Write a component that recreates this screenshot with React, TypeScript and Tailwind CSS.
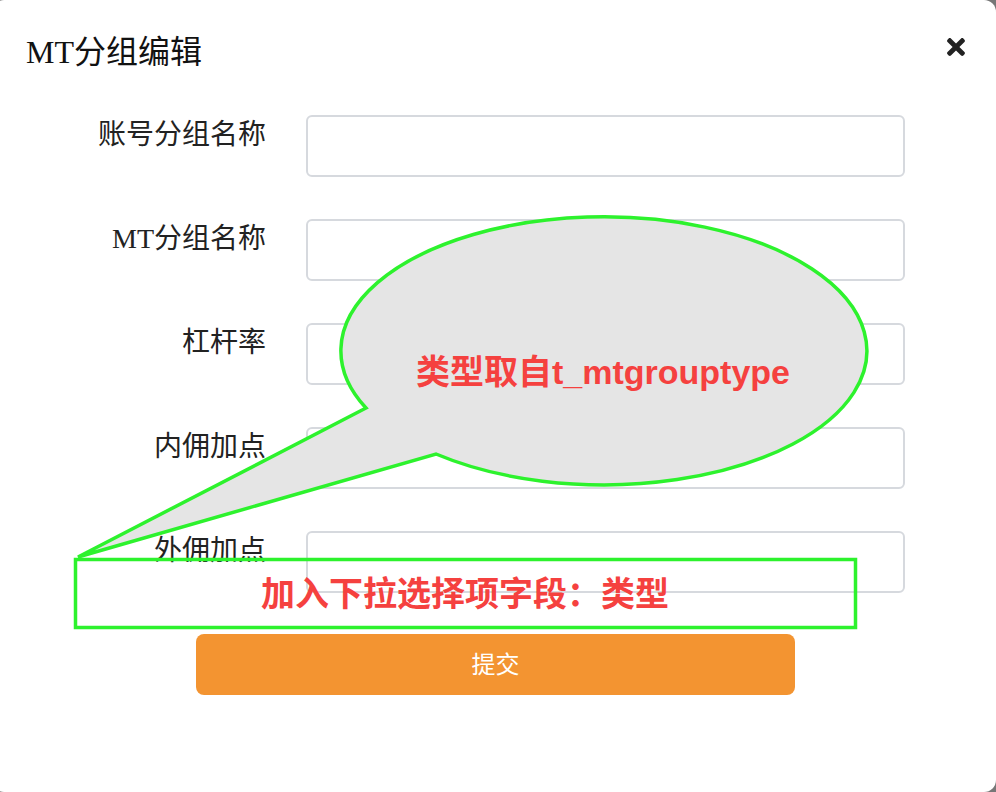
import React from 'react'
import { FaTimes } from 'react-icons/fa'

const serif = { fontFamily: '"Liberation Serif", "Noto Sans CJK SC", serif' }
const sans = { fontFamily: '"Liberation Sans", "Noto Sans CJK SC", sans-serif' }

const fields = ['账号分组名称', 'MT分组名称', '杠杆率', '内佣加点', '外佣加点']

const Row: React.FC<{ label: string }> = ({ label }) => (
  <div className="flex items-start gap-[40px]">
    <label className="w-[266px] text-right text-[28px] leading-[40px] text-[#222]" style={serif}>
      {label}
    </label>
    <input
      type="text"
      className="w-[599px] h-[62px] rounded-[6px] border-2 border-[#d6d9de] bg-white outline-none"
    />
  </div>
)

export default function App() {
  return (
    <div className="w-[996px] h-[792px] bg-[#777] overflow-hidden">
      <div className="relative -ml-[8px] pl-[8px] w-[1004px] h-[792px] bg-white rounded-[12px]">
        <div className="flex justify-between items-start h-[115px] pl-[26px] pr-[27px]">
          <h1 className="mt-[33px] text-[32px] leading-[38px] text-[#111]" style={serif}>
            MT分组编辑
          </h1>
          <button className="mt-[34px] text-[#222]">
            <FaTimes size={26} />
          </button>
        </div>

        <form className="flex flex-col gap-[42px]">
          {fields.map((f) => (
            <Row key={f} label={f} />
          ))}
        </form>

        <div className="mt-[41px] pl-[196px]">
          <button
            className="w-[599px] h-[61px] rounded-[8px] bg-[#f39431] text-white text-[24px]"
            style={serif}
          >
            提交
          </button>
        </div>

        {/* annotation overlay */}
        <svg className="absolute left-[8px] top-0 pointer-events-none" width="996" height="792">
          <path
            d="M 366 408 L 78 557 L 436 454 A 263 134 0 1 0 366 408 Z"
            fill="#e5e5e5"
            stroke="#2df22d"
            strokeWidth="3.5"
            strokeLinejoin="miter"
          />
          <rect x="75.5" y="559.5" width="780" height="68" fill="none" stroke="#2df22d" strokeWidth="3.5" />
        </svg>
        <div
          className="absolute left-[8px] top-[351px] w-[1206px] text-center text-[34px] leading-[42px] font-bold text-[#f5413f]"
          style={sans}
        >
          类型取自t_mtgrouptype
        </div>
        <div
          className="absolute left-[83px] top-[573px] w-[780px] text-center text-[34px] leading-[42px] font-bold text-[#f5413f]"
          style={sans}
        >
          加入下拉选择项字段：类型
        </div>
      </div>
    </div>
  )
}
